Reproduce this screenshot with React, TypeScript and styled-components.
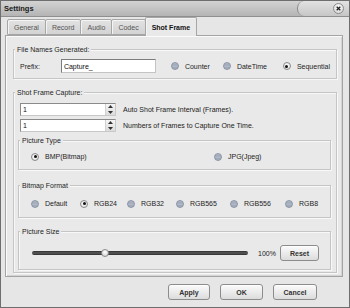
import React from "react";
import styled, { createGlobalStyle } from "styled-components";

const Global = createGlobalStyle`
  html, body { margin: 0; padding: 0; background: #ffffff; }
  body { font-family: "Liberation Sans", Arial, sans-serif; font-size: 7px; color: #1e1e1e; }
  * { box-sizing: border-box; }
`;

const Window = styled.div`
  width: 350px;
  height: 308px;
  background: #e6e6e6;
  border: 1px solid #6e6e6e;
  display: flex;
  flex-direction: column;
  overflow: hidden;
`;

const TitleBar = styled.div`
  height: 16px;
  flex: none;
  display: flex;
  align-items: stretch;
  justify-content: space-between;
  background: linear-gradient(#d3d3d3, #b4b4b4);
  border-bottom: 1px solid #8f8f8f;
`;

const Title = styled.div`
  font-weight: bold;
  font-size: 7.5px;
  color: #1a1a1a;
  padding-left: 3px;
  display: flex;
  align-items: center;
`;

const CloseTab = styled.div`
  width: 52px;
  display: flex;
  align-items: center;
  justify-content: flex-end;
  padding-right: 5px;
  background: linear-gradient(#e2e2e2, #c6c6c6);
  border-left: 1px solid #8a8a8a;
  border-radius: 7px 0 0 7px;
`;

const CloseButton = styled.div`
  width: 11px;
  height: 11px;
  border-radius: 50%;
  border: 1px solid #8c8c8c;
  background: radial-gradient(circle at 50% 35%, #ffffff, #cfcfcf);
  display: flex;
  align-items: center;
  justify-content: center;
`;

const Body = styled.div`
  flex: 1;
  display: flex;
  flex-direction: column;
  padding: 0 6px 0 4px;
`;

const TabStrip = styled.div`
  height: 18px;
  flex: none;
  display: flex;
  align-items: flex-end;
  padding-left: 2px;
`;

const Tab = styled.div<{ $active?: boolean }>`
  height: ${(p) => (p.$active ? "19px" : "16px")};
  margin-bottom: ${(p) => (p.$active ? "-1px" : "0")};
  margin-left: -1px;
  padding: ${(p) => (p.$active ? "1px 6px 0" : "0 6px")};
  position: relative;
  z-index: ${(p) => (p.$active ? 1 : 0)};
  border: 1px solid #a6a6a6;
  border-bottom: ${(p) => (p.$active ? "none" : "1px solid #a6a6a6")};
  border-radius: 2px 2px 0 0;
  background: ${(p) => (p.$active ? "#e9e9e9" : "linear-gradient(#e2e2e2, #d3d3d3)")};
  color: ${(p) => (p.$active ? "#111" : "#555")};
  font-weight: ${(p) => (p.$active ? "bold" : "normal")};
  display: flex;
  align-items: center;
  justify-content: center;
  box-shadow: inset 1px 1px 0 #f4f4f4;
  &:first-child { margin-left: 0; }
`;

const Panel = styled.div`
  height: 242px;
  flex: none;
  border: 1px solid #a4a4a4;
  box-shadow: inset 1px 1px 0 #fbfbfb, inset -1px -1px 0 #d4d4d4;
  background: #e9e9e9;
  padding: 13px 5px 0 7px;
  display: flex;
  flex-direction: column;
`;

const Group = styled.div<{ $mt?: number }>`
  margin-top: ${(p) => p.$mt ?? 0}px;
  border: 1px solid #c5c5c5;
  box-shadow: inset 1px 1px 0 #f8f8f8, 1px 1px 0 #f8f8f8;
  display: flex;
  flex-direction: column;
`;

const Legend = styled.div`
  margin: -5px 0 0 1px;
  padding: 0 2px;
  line-height: 9px;
  height: 9px;
  width: fit-content;
  background: #e9e9e9;
  color: #1e1e1e;
`;

const GroupBody = styled.div<{ $pad: string }>`
  padding: ${(p) => p.$pad};
  display: flex;
  flex-direction: column;
`;

const Row = styled.div<{ $mt?: number; $h?: number }>`
  display: flex;
  align-items: center;
  margin-top: ${(p) => p.$mt ?? 0}px;
  height: ${(p) => p.$h ?? 9}px;
`;

const PrefixLabel = styled.div`
  width: 43px;
`;

const TextInput = styled.div`
  width: 95px;
  height: 14px;
  border: 1px solid;
  border-color: #7c7c7c #c4c4c4 #c4c4c4 #7c7c7c;
  background: #ffffff;
  color: #111;
  padding: 0 2px;
  margin-right: 15px;
  display: flex;
  align-items: center;
  flex: none;
`;

const RadioOption = styled.div<{ $w?: number }>`
  display: flex;
  align-items: center;
  gap: 6px;
  width: ${(p) => (p.$w ? `${p.$w}px` : "auto")};
  flex: none;
`;

const RadioCircle = styled.div<{ $on?: boolean }>`
  width: 8px;
  height: 8px;
  border-radius: 50%;
  flex: none;
  display: flex;
  align-items: center;
  justify-content: center;
  border: 1px solid ${(p) => (p.$on ? "#8a8a8a" : "#8b95a6")};
  background: ${(p) =>
    p.$on
      ? "radial-gradient(circle at 50% 40%, #ffffff, #dcdcdc)"
      : "linear-gradient(#b4bccb 0%, #9aa5b7 40%, #e2e6ee 50%, #9aa5b7 62%, #a8b1c1 100%)"};
`;

const RadioDot = styled.div`
  width: 3px;
  height: 3px;
  border-radius: 50%;
  background: #111;
`;

const Spinner = styled.div`
  width: 96px;
  height: 13px;
  display: flex;
  border: 1px solid;
  border-color: #8a8a8a #c8c8c8 #c8c8c8 #8a8a8a;
  background: #ffffff;
  flex: none;
`;

const SpinText = styled.div`
  flex: 1;
  padding-left: 2px;
  display: flex;
  align-items: center;
  color: #111;
`;

const SpinButtons = styled.div`
  width: 10px;
  display: flex;
  flex-direction: column;
  border-left: 1px solid #d0d0d0;
  background: linear-gradient(#f6f6f6, #dcdcdc);
`;

const SpinHalf = styled.div`
  flex: 1;
  display: flex;
  align-items: center;
  justify-content: center;
`;

const SpinLabel = styled.div`
  margin-left: 7px;
  color: #222;
`;

const SpinRow = styled.div<{ $mt: number }>`
  display: flex;
  align-items: center;
  margin: ${(p) => p.$mt}px 0 0 2px;
`;

const SliderTrack = styled.div`
  position: relative;
  width: 216px;
  height: 4px;
  border-radius: 2px;
  background: linear-gradient(#2e2e2e, #5a5a5a 50%, #2e2e2e);
  flex: none;
`;

const SliderThumb = styled.div`
  position: absolute;
  top: -2px;
  width: 8px;
  height: 8px;
  margin-left: -4px;
  border-radius: 50%;
  border: 1px solid #8b8b8b;
  background: radial-gradient(circle at 50% 35%, #ffffff, #c9c9c9);
`;

const Percent = styled.div`
  margin-left: 10px;
  width: 22px;
  color: #222;
`;

const Button = styled.button<{ $w: number }>`
  width: ${(p) => p.$w}px;
  height: 16px;
  margin: 0;
  padding: 0;
  border: 1px solid #8c8c8c;
  border-radius: 3px;
  background: linear-gradient(#fbfbfb, #dcdcdc);
  box-shadow: inset 0 1px 0 #ffffff;
  font-family: inherit;
  font-size: 7px;
  font-weight: bold;
  color: #333;
  flex: none;
`;

const Footer = styled.div`
  display: flex;
  justify-content: flex-end;
  gap: 10px;
  padding: 7px 26px 0 0;
`;

const Arrow = ({ up }: { up?: boolean }) => (
  <svg width="5" height="3" viewBox="0 0 5 3">
    <path d={up ? "M0 3 L2.5 0 L5 3 Z" : "M0 0 L2.5 3 L5 0 Z"} fill="#333" />
  </svg>
);

const Radio = ({ label, on, w }: { label: string; on?: boolean; w?: number }) => (
  <RadioOption $w={w}>
    <RadioCircle $on={on}>{on && <RadioDot />}</RadioCircle>
    <span>{label}</span>
  </RadioOption>
);

const SpinBox = ({ value }: { value: string }) => (
  <Spinner>
    <SpinText>{value}</SpinText>
    <SpinButtons>
      <SpinHalf>
        <Arrow up />
      </SpinHalf>
      <SpinHalf>
        <Arrow />
      </SpinHalf>
    </SpinButtons>
  </Spinner>
);

const tabs = ["General", "Record", "Audio", "Codec", "Shot Frame"];
const bitmapFormats: [string, number?][] = [
  ["Default", 49],
  ["RGB24", 47],
  ["RGB32", 49],
  ["RGB565", 54],
  ["RGB556", 55],
  ["RGB8"],
];
const sliderPos = 0.338;

export default function App() {
  return (
    <>
      <Global />
      <Window>
        <TitleBar>
          <Title>Settings</Title>
          <CloseTab>
            <CloseButton>
              <svg width="5" height="5" viewBox="0 0 5 5">
                <path d="M0.7 0.7 L4.3 4.3 M4.3 0.7 L0.7 4.3" stroke="#222" strokeWidth="1.3" />
              </svg>
            </CloseButton>
          </CloseTab>
        </TitleBar>
        <Body>
          <TabStrip>
            {tabs.map((t) => (
              <Tab key={t} $active={t === "Shot Frame"}>
                {t}
              </Tab>
            ))}
          </TabStrip>
          <Panel>
            <Group>
              <Legend>File Names Generated:</Legend>
              <GroupBody $pad="0 6px 5px 6px">
                <Row $mt={5} $h={14}>
                  <PrefixLabel>Prefix:</PrefixLabel>
                  <TextInput>Capture_</TextInput>
                  <Radio label="Counter" w={52} />
                  <Radio label="DateTime" w={60} />
                  <Radio label="Sequential" on />
                </Row>
              </GroupBody>
            </Group>
            <Group $mt={13}>
              <Legend>Shot Frame Capture:</Legend>
              <GroupBody $pad="0 5px 2px 4px">
                <SpinRow $mt={6}>
                  <SpinBox value="1" />
                  <SpinLabel>Auto Shot Frame Interval (Frames).</SpinLabel>
                </SpinRow>
                <SpinRow $mt={3}>
                  <SpinBox value="1" />
                  <SpinLabel>Numbers of Frames to Capture One Time.</SpinLabel>
                </SpinRow>
                <Group $mt={8}>
                  <Legend>Picture Type</Legend>
                  <GroupBody $pad="0 0 8px 12px">
                    <Row $mt={7}>
                      <Radio label="BMP(Bitmap)" on w={183} />
                      <Radio label="JPG(Jpeg)" />
                    </Row>
                  </GroupBody>
                </Group>
                <Group $mt={15}>
                  <Legend>Bitmap Format</Legend>
                  <GroupBody $pad="0 0 9px 12px">
                    <Row $mt={9}>
                      {bitmapFormats.map(([l, w]) => (
                        <Radio key={l} label={l} w={w} on={l === "RGB24"} />
                      ))}
                    </Row>
                  </GroupBody>
                </Group>
                <Group $mt={13}>
                  <Legend>Picture Size</Legend>
                  <GroupBody $pad="0 0 8px 13px">
                    <Row $mt={9} $h={16}>
                      <SliderTrack>
                        <SliderThumb style={{ left: `${sliderPos * 100}%` }} />
                      </SliderTrack>
                      <Percent>100%</Percent>
                      <Button $w={39}>Reset</Button>
                    </Row>
                  </GroupBody>
                </Group>
              </GroupBody>
            </Group>
          </Panel>
          <Footer>
            <Button $w={42}>Apply</Button>
            <Button $w={43}>OK</Button>
            <Button $w={44}>Cancel</Button>
          </Footer>
        </Body>
      </Window>
    </>
  );
}
